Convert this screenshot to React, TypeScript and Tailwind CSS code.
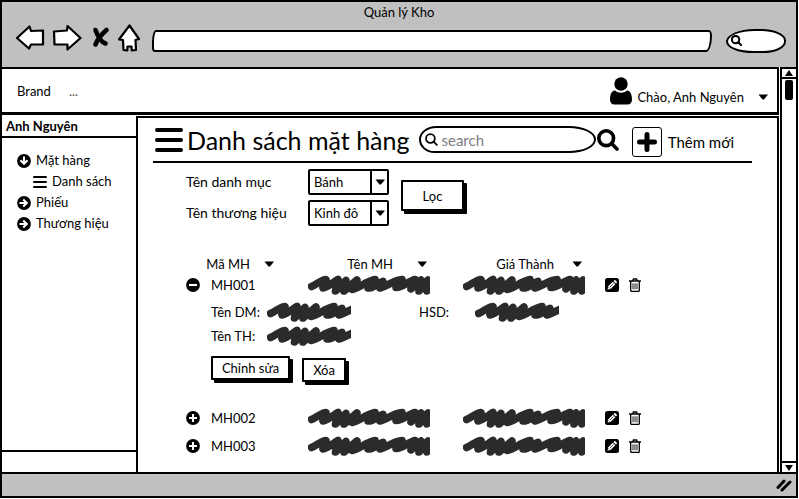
import { useState, type ReactNode } from "react";

const caretPath = "M0.5 0.5h9.5l-4 5h-1.5z";

function Caret({ className = "" }: { className?: string }) {
  return (
    <svg className={`shrink-0 ${className}`} width="11" height="6" viewBox="0 0 11 6" aria-hidden="true">
      <path d={caretPath} fill="#000" />
    </svg>
  );
}

function Bars({ width, height, thickness }: { width: number; height: number; thickness: number }) {
  const mid = height / 2;
  const half = thickness / 2;
  return (
    <svg className="shrink-0" width={width} height={height} viewBox={`0 0 ${width} ${height}`} aria-hidden="true">
      <path
        d={`M${half} ${half}H${width - half}M${half} ${mid}H${width - half}M${half} ${height - half}H${width - half}`}
        stroke="#000"
        strokeWidth={thickness}
        strokeLinecap="round"
      />
    </svg>
  );
}

function Magnifier({ size, weight }: { size: number; weight: number }) {
  return (
    <svg className="shrink-0" width={size} height={size} viewBox="0 0 22 22" fill="none" stroke="#000" aria-hidden="true">
      <circle cx="9.2" cy="9.2" r="7.4" strokeWidth={weight} />
      <path d="M14.6 14.6l5.4 5.4" strokeWidth={weight} strokeLinecap="round" />
    </svg>
  );
}

function CircleIcon({ kind }: { kind: "down" | "right" | "plus" | "minus" }) {
  const marks = {
    down: "M7 2.5v7M3.400 6.200L7 9.800l3.600-3.600",
    right: "M2.500 7h7M6.200 3.400L9.800 7l-3.600 3.600",
    plus: "M7 3v8M3 7h8",
    minus: "M3 7h8",
  };
  return (
    <svg className="shrink-0" width="14" height="14" viewBox="0 0 14 14" aria-hidden="true">
      <circle cx="7" cy="7" r="6.9" fill="#000" />
      <path d={marks[kind]} stroke="#fff" strokeWidth="2.1" fill="none" />
    </svg>
  );
}

function Scribble({ width }: { width: number }) {
  return (
    <svg className="shrink-0" width={width} height="20" viewBox={`0 0 ${width} 20`} aria-hidden="true">
      <path
        d="M3.500 11.500C9 9 14 4.500 18 4.500C19 6 14 10 15 13C20 12 27 6 30 4.500L27.500 16L38 5.500L36 16L49 5L44 14.500C52 13 58 6 67 4.500C67 7 60 9 60 13C66 13 70 8 75 6.500L72 13C80 11 86 5 94 4.500C94 7 88 9 88 12.500C95 12 101 6 107 4.500L103 14L113 5L111 16L120 5L119 16L126 6"
        fill="none"
        stroke="#2b2b2b"
        strokeWidth="7.6"
        strokeLinecap="round"
        strokeLinejoin="round"
      />
    </svg>
  );
}

function PencilIcon() {
  return (
    <svg width="14" height="14" viewBox="0 0 14 14" aria-hidden="true">
      <rect width="14" height="14" rx="2.5" fill="#000" />
      <path d="M2.6 11.500l.5-3 4.700-4.700 2.500 2.500-4.700 4.700z" fill="#fff" />
      <path d="M8.500 3.200l.9-.9c.3-.3.7-.3 1 0l1.400 1.400c.3.3.3.7 0 1l-.9.9z" fill="#fff" />
      <path d="M3.500 9.300l1.300 1.300M5 9l3.500-3.500" stroke="#000" strokeWidth=".7" />
    </svg>
  );
}

function TrashIcon() {
  return (
    <svg width="12" height="14" viewBox="0 0 12 14" fill="none" stroke="#000" aria-hidden="true">
      <path d="M0 3h12M3.700 3l.7-2h3.200l.7 2M1.700 3v9.300c0 .7.4 1.100 1 1.100h6.600c.6 0 1-.4 1-1.100V3" strokeWidth="1.300" />
      <path d="M4 5.300v6M6 5.300v6M8 5.300v6" strokeWidth=".9" />
    </svg>
  );
}

const navIcons = [
  {
    label: "Back",
    d: "M2 14L14.500 2.500L16 7L28 6.500L28 20.500L16 20.500L14 24.500Z",
  },
  {
    label: "Forward",
    d: "M2 7.500L15 6.500L15.500 2L28.500 14L15.500 25.500L15.500 20.500L2.500 20.500Z",
  },
];

function BrowserChrome() {
  return (
    <header>
      <h1 className="h-[20px] text-center leading-[20px]">Quản lý Kho</h1>
      <div className="flex h-[45px] items-center pr-[10px] pb-2 pl-[13px]">
        <div className="flex shrink-0 items-center gap-[7px] pb-[6px]">
          {navIcons.map((icon) => (
            <button key={icon.label} type="button" aria-label={icon.label}>
              <svg width="30" height="28" viewBox="0 0 30 28">
                <path d={icon.d} fill="#fff" stroke="#000" strokeWidth="2.200" strokeLinejoin="round" />
              </svg>
            </button>
          ))}
          <button type="button" aria-label="Stop">
            <svg width="22" height="28" viewBox="0 0 22 28">
              <path d="M6.500 6C9 13 12 18 16.500 19.500M17.500 6C13 10 8 16 6.500 20.500" fill="none" stroke="#000" strokeWidth="4.600" strokeLinecap="round" />
            </svg>
          </button>
          <button type="button" aria-label="Home">
            <svg width="22" height="28" viewBox="0 0 22 28">
              <path d="M11.500 1.500L21 15L17.500 16L18 26L13.800 26.300L13.500 22.500L9.500 22.500L9.300 26.500L5.500 26L5 16L1 15.500Z" fill="#fff" stroke="#000" strokeWidth="2.200" strokeLinejoin="round" />
            </svg>
          </button>
        </div>
        <input
          aria-label="Address"
          className="ml-3 h-[22px] min-w-0 flex-1 rounded-[4px_3px_6px_3px/12px_6px_16px_4px] border-2 border-black bg-white px-2 outline-none"
        />
        <div className="relative ml-[14px] shrink-0">
          <span className="absolute top-[6px] left-[5px]">
            <Magnifier size={11} weight={4} />
          </span>
          <input
            aria-label="Web search"
            className="block h-[24px] w-[60px] rounded-[50%_45%_40%_48%/55%_50%_50%_50%] border-2 border-black bg-white pr-2 pl-5 outline-none"
          />
        </div>
      </div>
    </header>
  );
}

function AppHeader() {
  return (
    <div className="flex h-[48px] items-center border-t-2 border-r-2 border-b-[3px] border-black bg-white pr-2 pl-[15px]">
      <a href="#brand">Brand</a>
      <a href="#more" className="ml-[18px] text-[#555]">...</a>
      <button type="button" className="ml-auto flex items-center">
        <svg width="24" height="28" viewBox="0 0 24 28" aria-hidden="true">
          <circle cx="12" cy="7" r="6.700" />
          <path d="M6 13.500c3.500 3 8.500 3 12 0c3.500 0 5 4.500 5 9c0 3-1.800 5-4.500 5h-13c-2.700 0-4.500-2-4.500-5c0-4.500 1.500-9 5-9z" />
        </svg>
        <span className="ml-1 pt-3">Chào, Anh Nguyên</span>
        <Caret className="mt-3 ml-[14px]" />
      </button>
    </div>
  );
}

function Sidebar() {
  return (
    <aside className="flex w-[134px] shrink-0 flex-col bg-white">
      <h2 className="border-b-2 border-black pl-1 leading-[20px] font-bold">Anh Nguyên</h2>
      <nav className="flex-1 pt-3 pl-[15px] leading-[21px]">
        <a href="#items" className="flex items-center gap-[5px]">
          <CircleIcon kind="down" />
          Mặt hàng
        </a>
        <a href="#list" className="flex items-center gap-[5px] pl-4">
          <Bars width={14} height={12} thickness={2} />
          Danh sách
        </a>
        <a href="#tickets" className="flex items-center gap-[5px]">
          <CircleIcon kind="right" />
          Phiếu
        </a>
        <a href="#brands" className="flex items-center gap-[5px]">
          <CircleIcon kind="right" />
          Thương hiệu
        </a>
      </nav>
      <div className="h-[22px] border-t-2 border-black" />
    </aside>
  );
}

function Choice({ id, label, value }: { id: string; label: string; value: string }) {
  return (
    <div className="flex h-[26px] items-center">
      <label htmlFor={id} className="w-[122px] shrink-0 text-sm">
        {label}
      </label>
      <div className="relative w-[81px]">
        <select
          id={id}
          defaultValue={value}
          className="block h-[26px] w-full appearance-none rounded-[2px] border-2 border-black bg-white pl-1 outline-none"
        >
          <option>{value}</option>
        </select>
        <span className="pointer-events-none absolute inset-y-0 right-0 flex w-[19px] items-center justify-center border-l-2 border-black">
          <Caret />
        </span>
      </div>
    </div>
  );
}

function SketchButton({ children, className }: { children: ReactNode; className: string }) {
  return (
    <button
      type="button"
      className={`rounded-[1px] border-2 border-black bg-white text-center shadow-[3px_3px_0_#000] ${className}`}
    >
      {children}
    </button>
  );
}

function SortHead({ children, className }: { children: ReactNode; className: string }) {
  return (
    <th scope="col" className="h-[20px] p-0 font-normal">
      <button type="button" className={`flex w-full items-center whitespace-nowrap ${className}`}>
        {children}
        <Caret />
      </button>
    </th>
  );
}

function ItemRow({ code, open, onToggle }: { code: string; open: boolean; onToggle: () => void }) {
  return (
    <tr className={open ? "h-[22px]" : "h-[28px]"}>
      <td className="p-0">
        <button type="button" aria-label="Toggle" aria-expanded={open} onClick={onToggle} className="block">
          <CircleIcon kind={open ? "minus" : "plus"} />
        </button>
      </td>
      <td className="p-0">{code}</td>
      <td className="p-0">
        <Scribble width={122} />
      </td>
      <td className="p-0">
        <Scribble width={122} />
      </td>
      <td className="p-0">
        <button type="button" aria-label="Edit" className="block">
          <PencilIcon />
        </button>
      </td>
      <td className="p-0">
        <button type="button" aria-label="Delete" className="block">
          <TrashIcon />
        </button>
      </td>
    </tr>
  );
}

function ItemTable() {
  const [openCode, setOpenCode] = useState("MH001");
  const codes = ["MH001", "MH002", "MH003"];
  return (
    <table className="mt-[28px] ml-[33px] w-[455px] table-fixed border-collapse text-left">
      <colgroup>
        <col className="w-[25px]" />
        <col className="w-[97px]" />
        <col className="w-[155px]" />
        <col className="w-[142px]" />
        <col className="w-[24px]" />
        <col className="w-[12px]" />
      </colgroup>
      <thead>
        <tr>
          <td className="p-0" />
          <SortHead className="justify-end gap-[14px] pr-[33px]">Mã MH</SortHead>
          <SortHead className="justify-end gap-6 pr-[35px]">Tên MH</SortHead>
          <SortHead className="justify-end gap-[18px] pr-[22px]">Giá Thành</SortHead>
          <td className="p-0" />
          <td className="p-0" />
        </tr>
      </thead>
      {codes.map((code) => (
        <tbody key={code}>
          <ItemRow
            code={code}
            open={code === openCode}
            onToggle={() => setOpenCode(code === openCode ? "" : code)}
          />
          {code === openCode && (
            <tr>
              <td className="p-0" />
              <td colSpan={5} className="pt-1 pr-0 pb-[22px] pl-0">
                <div className="grid grid-cols-[56px_152px_56px_84px] items-center leading-[24px]">
                  <span>Tên DM:</span>
                  <Scribble width={84} />
                  <span>HSD:</span>
                  <Scribble width={84} />
                  <span>Tên TH:</span>
                  <Scribble width={84} />
                </div>
                <div className="mt-2 flex gap-3">
                  <SketchButton className="h-[24px] w-[79px] leading-[20px]">Chỉnh sửa</SketchButton>
                  <SketchButton className="mt-[2px] h-[24px] w-[44px] leading-[20px]">Xóa</SketchButton>
                </div>
              </td>
            </tr>
          )}
        </tbody>
      ))}
    </table>
  );
}

function Main() {
  return (
    <main className="min-w-0 flex-1 border-t-2 border-r-2 border-l-2 border-black bg-white pr-[25px] pl-[15px]">
      <div className="flex h-[45px] items-center border-b-2 border-black pr-[18px] pl-[2px]">
        <Bars width={28} height={24} thickness={4} />
        <h2 className="ml-1 shrink-0 text-[25px] leading-[32px]">Danh sách mặt hàng</h2>
        <div className="relative ml-[10px] min-w-0 flex-1">
          <span className="absolute top-[7px] left-[6px]">
            <Magnifier size={13} weight={3} />
          </span>
          <input
            aria-label="Search"
            placeholder="search"
            className="block h-[27px] w-full rounded-[18px_28px_28px_16px/14px_14px_14px_14px] border-2 border-black bg-white pl-5 text-[15px] outline-none placeholder:text-[#7d7d86]"
          />
        </div>
        <button type="button" aria-label="Find" className="mx-px shrink-0">
          <Magnifier size={22} weight={3.6} />
        </button>
        <button type="button" className="ml-3 flex shrink-0 items-center gap-[6px] pt-1 text-[15px]">
          <span className="flex h-[30px] w-[30px] items-center justify-center rounded-[3px] border border-black">
            <svg width="20" height="20" viewBox="0 0 20 20" aria-hidden="true">
              <path d="M10 2.500v15M2.500 10h15" stroke="#000" strokeWidth="5" strokeLinecap="round" />
            </svg>
          </span>
          Thêm mới
        </button>
      </div>
      <div className="mt-[6px] ml-[33px] flex items-center gap-3">
        <div className="flex flex-col gap-[5px]">
          <Choice id="category" label="Tên danh mục" value="Bánh" />
          <Choice id="brand" label="Tên thương hiệu" value="Kinh đô" />
        </div>
        <SketchButton className="mb-1 h-[31px] w-[63px]">Lọc</SketchButton>
      </div>
      <ItemTable />
    </main>
  );
}

function ScrollBar() {
  return (
    <div className="ml-px flex w-[16px] shrink-0 flex-col items-stretch border-t-2 border-l-2 border-black bg-white">
      <button type="button" aria-label="Scroll up" className="flex h-[10px] items-center justify-center border-b-2 border-black">
        <svg width="8" height="6" viewBox="0 0 8 6">
          <path d="M4 0l4 6h-8z" />
        </svg>
      </button>
      <div className="mx-[3px] mt-px h-[20px] rounded-[2px] bg-black" />
      <button type="button" aria-label="Scroll down" className="mt-auto flex h-[11px] items-center justify-center border-t-2 border-black">
        <svg width="8" height="6" viewBox="0 0 8 6">
          <path d="M0 0h8l-4 6z" />
        </svg>
      </button>
    </div>
  );
}

export default function App() {
  return (
    <div className="flex min-h-screen flex-col bg-white pr-px pb-px font-[Lato,'Noto_Sans',sans-serif] text-[13px] leading-[20px] text-black">
      <div className="flex flex-1 flex-col border-2 border-black bg-[#c0c0c0]">
        <BrowserChrome />
        <div className="flex flex-1 bg-white">
          <div className="flex min-w-0 flex-1 flex-col">
            <AppHeader />
            <div className="mt-px flex flex-1">
              <Sidebar />
              <Main />
            </div>
          </div>
          <ScrollBar />
        </div>
        <footer className="flex h-[24px] items-center justify-end border-t-2 border-black pr-1">
          <svg width="16" height="14" viewBox="0 0 16 14" aria-hidden="true">
            <path d="M2 9.500L8 3M6 12L14 4" stroke="#000" strokeWidth="3" strokeLinecap="round" />
          </svg>
        </footer>
      </div>
    </div>
  );
}
